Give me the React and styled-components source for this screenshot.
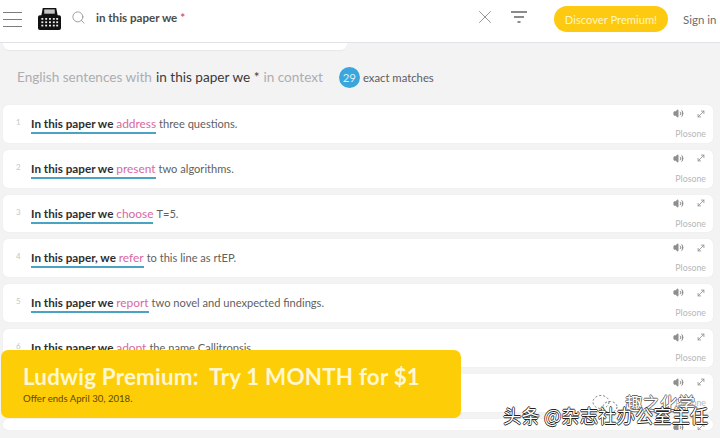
import React from "react";
import styled, { createGlobalStyle } from "styled-components";
import { Search, X, Volume2, MoveDiagonal } from "lucide-react";

const GlobalStyle = createGlobalStyle`
  html, body {
    margin: 0;
    padding: 0;
    width: 720px;
    height: 438px;
    overflow: hidden;
    background: #f3f3f4;
    font-family: "Lato", "Noto Sans", sans-serif;
  }
`;

const Page = styled.div`
  position: relative;
  width: 720px;
  height: 438px;
  overflow: hidden;
`;

const Header = styled.header`
  display: flex;
  align-items: center;
  height: 42px;
  background: #fff;
  border-bottom: 1px solid #e1e2e6;
`;

const Burger = styled.div`
  display: flex;
  flex-direction: column;
  gap: 6px;
  width: 19px;
  margin: -4px 0 0 3px;
  span {
    height: 1px;
    background: #7c7c7c;
  }
`;

const Logo = styled.svg`
  width: 23px;
  height: 23px;
  margin: -6px 0 0 16px;
`;

const SearchIcon = styled(Search)`
  margin: -8px 0 0 10px;
  color: #8b8b8b;
`;

const Query = styled.div`
  flex: 1;
  margin: -8px 0 0 10px;
  font-size: 11.6px;
  font-weight: 700;
  color: #4c4c4c;
  i {
    color: #e0527f;
    font-style: normal;
  }
`;

const ClearIcon = styled(X)`
  margin-top: -8px;
  color: #8d8d8d;
`;

const FilterIcon = styled.svg`
  width: 16px;
  height: 14px;
  margin: -8px 0 0 15px;
`;

const Premium = styled.div`
  width: 114px;
  height: 26px;
  margin: -4px 0 0 27px;
  border-radius: 13px;
  background: #fdc911;
  color: #fff6c4;
  font-size: 11.2px;
  display: flex;
  align-items: center;
  justify-content: center;
`;

const SignIn = styled.div`
  width: 52px;
  padding-left: 15px;
  box-sizing: border-box;
  margin-top: -4px;
  font-size: 11.5px;
  color: #6d6d6d;
  white-space: nowrap;
`;

const CardEnd = styled.div`
  height: 7px;
  width: 344px;
  margin-left: 3px;
  background: #fff;
  border-radius: 0 0 6px 6px;
  box-shadow: 0 1px 1px #e7e7e9;
`;

const Heading = styled.div`
  display: flex;
  align-items: center;
  height: 24px;
  margin: 15px 0 0 17px;
  font-size: 13.6px;
  color: #adadb0;
  b {
    font-weight: 400;
    color: #3a3a3a;
    padding: 0 4px;
  }
`;

const Count = styled.span`
  width: 21px;
  height: 21px;
  border-radius: 50%;
  background: #3aa6dc;
  color: #d9eef9;
  font-size: 11.5px;
  display: flex;
  align-items: center;
  justify-content: center;
  margin: 0 3px 0 16px;
`;

const Exact = styled.span`
  font-size: 11.3px;
  color: #5d5d5d;
`;

const List = styled.div`
  display: flex;
  flex-direction: column;
  gap: 7px;
  margin: 16px 7px 0 3px;
`;

const Row = styled.div`
  position: relative;
  flex: none;
  height: ${(p) => (p.$short ? 11 : 37.8)}px;
  overflow: ${(p) => (p.$short ? "hidden" : "visible")};
  display: flex;
  background: #fff;
  border-radius: 5px;
  box-shadow: 0 0 1px #dcdcde;
`;

const Num = styled.span`
  width: 28px;
  padding: 12px 0 0 13px;
  box-sizing: border-box;
  font-size: 8px;
  color: #c6c6c6;
`;

const Sentence = styled.div`
  flex: 1;
  padding-top: 11px;
  font-size: 11.1px;
  line-height: 15px;
  color: #5f5f5f;
`;

const Match = styled.span`
  display: inline-block;
  border-bottom: 2px solid #4ba3c4;
  padding-bottom: 1px;
  margin-right: 3px;
  font-size: 11.7px;
  font-weight: 700;
  color: #2e2e2e;
  em {
    font-style: normal;
    font-weight: 400;
    font-size: 11.9px;
    color: #d868a4;
  }
`;

const Side = styled.div`
  width: 40px;
  margin-right: 7px;
  display: flex;
  flex-direction: column;
  align-items: flex-end;
`;

const Tools = styled.div`
  display: flex;
  align-items: center;
  gap: 12px;
  margin: 3px 0 0;
  color: #8e8e8e;
`;

const Source = styled.div`
  margin-top: 9px;
  font-size: 8.8px;
  color: #b7b7b7;
`;

const Banner = styled.div`
  position: absolute;
  left: 1px;
  top: 350px;
  width: 460px;
  height: 68px;
  padding: 13px 0 0 22px;
  box-sizing: border-box;
  background: #fdcd08;
  border-radius: 7px;
`;

const BannerTitle = styled.div`
  font-size: 22.4px;
  line-height: 27px;
  font-weight: 700;
  color: #fff7d0;
  white-space: pre;
  letter-spacing: 0.2px;
`;

const BannerNote = styled.div`
  margin-top: 3px;
  font-size: 9.6px;
  color: #5e4a05;
`;

const Mark = styled.div`
  position: absolute;
  left: ${(p) => p.$x}px;
  top: ${(p) => p.$y}px;
  font-family: "Noto Sans CJK SC", sans-serif;
  font-size: ${(p) => p.$size}px;
  line-height: 1;
  white-space: nowrap;
  color: #fff;
  text-shadow: -0.7px 0 0 ${(p) => p.$edge}, 0.7px 0 0 ${(p) => p.$edge},
    0 -0.7px 0 ${(p) => p.$edge}, 0 0.7px 0 ${(p) => p.$edge};
`;

const MarkIcon = styled.svg`
  position: absolute;
  left: 590px;
  top: 394px;
  width: 30px;
  height: 20px;
`;

const rows = [
  { match: "In this paper we ", word: "address", rest: "three questions." },
  { match: "In this paper we ", word: "present", rest: "two algorithms." },
  { match: "In this paper we ", word: "choose", rest: "T=5." },
  { match: "In this paper, we ", word: "refer", rest: "to this line as rtEP." },
  { match: "In this paper we ", word: "report", rest: "two novel and unexpected findings." },
  { match: "In this paper we ", word: "adopt", rest: "the name Callitropsis." },
  { match: "", word: "", rest: "" },
  { match: "", word: "", rest: "", short: true },
];

export default function App() {
  return (
    <Page>
      <GlobalStyle />
      <Header>
        <Burger>
          <span />
          <span />
          <span />
        </Burger>
        <Logo viewBox="0 0 24 24">
          <path
            fill="#111"
            d="M5 1h14l1.5 7.5H22a2 2 0 0 1 2 2V22a2 2 0 0 1-2 2H2a2 2 0 0 1-2-2V10.5a2 2 0 0 1 2-2h1.5z"
          />
          <rect x="6.5" y="2.5" width="11" height="4.5" fill="#c4c4c4" />
          {[11.5, 15, 18.5].map((y) =>
            [3.5, 7.5, 11.5, 15.5, 19].map((x) => (
              <rect key={`${x}-${y}`} x={x} y={y} width="2" height="1.8" fill="#eee" />
            ))
          )}
        </Logo>
        <SearchIcon size={15} strokeWidth={1.3} />
        <Query>
          in this paper we <i>*</i>
        </Query>
        <ClearIcon size={22} strokeWidth={1} />
        <FilterIcon viewBox="0 0 16 14">
          <path d="M0 2h16M3 7h10M6.5 12h3" stroke="#666" strokeWidth="1.3" />
        </FilterIcon>
        <Premium>Discover Premium!</Premium>
        <SignIn>Sign in</SignIn>
      </Header>
      <CardEnd />
      <Heading>
        English sentences with <b>in this paper we *</b> in context
        <Count>29</Count>
        <Exact>exact matches</Exact>
      </Heading>
      <List>
        {rows.map((row, i) => (
          <Row key={i} $short={row.short}>
            <Num>{row.short ? "" : i + 1}</Num>
            <Sentence>
              {row.match && (
                <>
                  <Match>
                    {row.match}
                    <em>{row.word}</em>
                  </Match>
                  {row.rest}
                </>
              )}
            </Sentence>
            <Side>
              <Tools>
                <Volume2 size={11} fill="currentColor" />
                <MoveDiagonal size={10} />
              </Tools>
              <Source>Plosone</Source>
            </Side>
          </Row>
        ))}
      </List>
      <Banner>
        <BannerTitle>Ludwig Premium:  Try 1 MONTH for $1</BannerTitle>
        <BannerNote>Offer ends April 30, 2018.</BannerNote>
      </Banner>
      <MarkIcon viewBox="0 0 30 20">
        <ellipse cx="11" cy="8" rx="8" ry="6.5" fill="none" stroke="#777" strokeWidth="1" strokeDasharray="2 2" />
        <ellipse cx="20" cy="13" rx="7" ry="5.5" fill="none" stroke="#777" strokeWidth="1" strokeDasharray="2 2" />
      </MarkIcon>
      <Mark $x={625} $y={394} $size={17.5} $edge="#666">趣之化学</Mark>
      <Mark $x={503} $y={406} $size={18.4} $edge="#222">头条 @杂志社办公室主任</Mark>
    </Page>
  );
}
